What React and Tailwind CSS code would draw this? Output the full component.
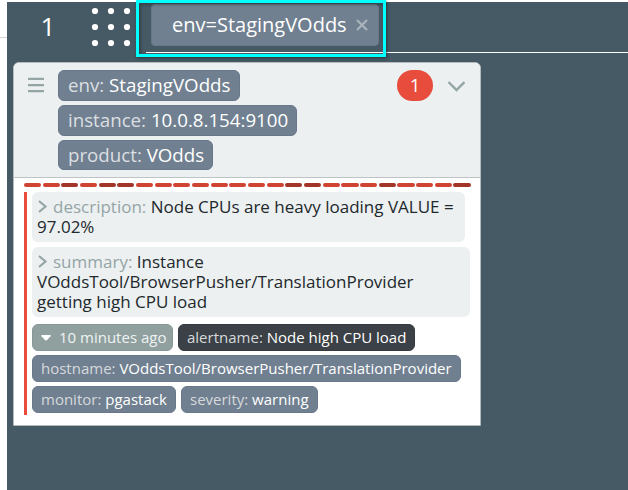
import React from 'react';

const ticks = Array.from({ length: 24 }, (_, i) => [2, 4, 5, 14, 15, 19, 23].includes(i));

function GroupLabel({ name, value, className }) {
  return (
    <div className={`flex items-center whitespace-pre rounded-[6px] border border-[#68788a] bg-[#708090] pl-[9px] text-[18.72px] leading-[26px] text-white ${className}`}>
      <span className="text-[#dcdfe2]">{name}: </span>
      <span>{value}</span>
    </div>
  );
}

function AlertLabel({ name, value, className }) {
  return (
    <div className={`flex h-[27px] items-center whitespace-pre rounded-[6px] border pl-2 text-[15px] text-white ${className}`}>
      <span className="text-[#d6d9dc]">{name}: </span>
      <span>{value}</span>
    </div>
  );
}

function Annotation({ name, lines, className }) {
  return (
    <div className={`rounded-[6px] bg-[#ecf0f1] px-[5px] py-[5px] text-[17px] leading-5 text-[#22282c] ${className}`}>
      <div className="flex whitespace-pre">
        <svg className="mr-[5px] h-5 w-[11px]" viewBox="0 0 11 20" fill="none" stroke="#95a5a6" strokeWidth="2.2">
          <path d="M2 4L8.5 9.5L2 15" />
        </svg>
        <span className="text-[#95a5a6]">{name}: </span>
        <span>{lines[0]}</span>
      </div>
      {lines.slice(1).map((line) => (
        <div key={line} className="whitespace-nowrap">{line}</div>
      ))}
    </div>
  );
}

export default function App() {
  return (
    <div className="relative flex h-[490px] w-[628px] overflow-hidden bg-white pt-[2px] font-['Open_Sans','Noto_Sans',sans-serif]">
      <div className="w-[7px] shrink-0 pt-[35px]">
        <div className="h-px bg-[#d4d4d4]" />
      </div>
      <div className="h-[488px] w-[621px] shrink-0 bg-[#455a64]">
        <header className="flex h-[60px]">
          <div className="w-[81px] pl-px pt-[9px] text-center text-[26px] leading-[30px] text-white">1</div>
          <svg className="h-[60px] w-[48px] shrink-0" viewBox="88 2 48 60" fill="#fff">
            {[11, 27, 43].map((y) => [95, 111, 127].map((x) => <circle key={`${x}-${y}`} cx={x} cy={y} r="3.1" />))}
          </svg>
          <div className="ml-[10px] h-[51px] w-[482px] border-b border-white pl-[5px] pt-[2px]">
            <div className="flex h-[42px] w-[228px] items-center rounded-[4px] border border-[#68788a] bg-[#708090] pl-5 text-[20px] text-white">
              <span className="w-[175px] whitespace-nowrap">env=StagingVOdds</span>
              <svg className="ml-[9px] h-3 w-3" viewBox="0 0 12 12" stroke="#a9b3bc" strokeWidth="2.2">
                <path d="M1 1L11 11M11 1L1 11" />
              </svg>
            </div>
          </div>
        </header>
        <main className="ml-[6px] h-[364px] w-[468px] rounded-t-[6px] rounded-b-[1px] border border-[#b5bbbd] bg-white">
          <div className="flex h-[115px] rounded-t-[5px] border-b border-[#bfc3c5] bg-[#ecf0f1] pt-[7px]">
            <svg className="ml-[14px] mt-[7px] h-[16px] w-[16px]" viewBox="0 0 16 16" fill="#95a5a6">
              <path d="M0 .8h16v2.3H0zM0 6.9h16v2.3H0zM0 12.9h16v2.3H0z" />
            </svg>
            <div className="ml-[14px] w-[338px]">
              <GroupLabel name="env" value="StagingVOdds" className="mb-1 h-[31px] w-[182px] pb-px" />
              <GroupLabel name="instance" value="10.0.8.154:9100" className="mb-1 h-[31px] w-[239px] pb-px" />
              <GroupLabel name="product" value="VOdds" className="h-[30px] w-[155px]" />
            </div>
            <div className="ml-[1px] flex h-[31px] w-9 items-center justify-center rounded-full bg-[#e74c3c] pb-px text-[18.72px] leading-[26px] text-white">1</div>
            <svg className="ml-[14px] mt-[10px] h-3 w-[18px]" viewBox="0 0 18 12" fill="none" stroke="#95a5a6" strokeWidth="2.4">
              <path d="M1.5 2L9.5 10L17.5 2" />
            </svg>
          </div>
          <div className="ml-[10px] mt-[5px] flex h-[4px] w-[448px]">
            {ticks.map((dark, i) => (
              <div key={i} className="flex-1 pr-[1.6px]">
                <div className={`h-[4px] rounded-[2px] ${dark ? 'bg-[#a23428]' : 'bg-[#d04434]'}`} />
              </div>
            ))}
          </div>
          <div className="ml-[10px] mt-[5px] h-[223px] w-[447px] border-l-[3px] border-[#e74c3c] pl-[5px]">
            <Annotation name="description" lines={['Node CPUs are heavy loading VALUE =', '97.02%']} className="mb-[5px] h-[50px] w-[433px]" />
            <Annotation name="summary" lines={['Instance', 'VOddsTool/BrowserPusher/TranslationProvider', 'getting high CPU load']} className="h-[70px] w-[438px]" />
            <div className="mt-[7px] flex gap-[5px]">
              <div className="flex h-[27px] w-[141px] items-center rounded-[6px] border border-[#879798] bg-[#8fa09f] pl-2 text-[15px] text-[#f0f3f3]">
                <svg className="mr-[8px] h-[6px] w-[10px]" viewBox="0 0 10 6" fill="#fff">
                  <path d="M0.5 0H9.5Q10 .5 9.5 1.2L5.8 5.2Q5 6 4.2 5.2L.5 1.2Q0 .5 .5 0Z" />
                </svg>
                <span className="whitespace-nowrap">10 minutes ago</span>
              </div>
              <AlertLabel name="alertname" value="Node high CPU load" className="w-[237px] border-[#343a3f] bg-[#3b4146]" />
            </div>
            <div className="mt-1 flex">
              <AlertLabel name="hostname" value="VOddsTool/BrowserPusher/TranslationProvider" className="w-[429px] border-[#68788a] bg-[#708090]" />
            </div>
            <div className="mt-1 flex gap-[5px]">
              <AlertLabel name="monitor" value="pgastack" className="w-[144px] border-[#68788a] bg-[#708090]" />
              <AlertLabel name="severity" value="warning" className="w-[137px] border-[#68788a] bg-[#708090]" />
            </div>
          </div>
        </main>
      </div>
      <div className="absolute left-[136px] top-0 h-[57px] w-[250px] border-[3px] border-[#00ffff] shadow-[1px_1px_3px_rgba(0,0,0,0.45),inset_2px_2px_3px_rgba(0,0,0,0.25)]" />
    </div>
  );
}
